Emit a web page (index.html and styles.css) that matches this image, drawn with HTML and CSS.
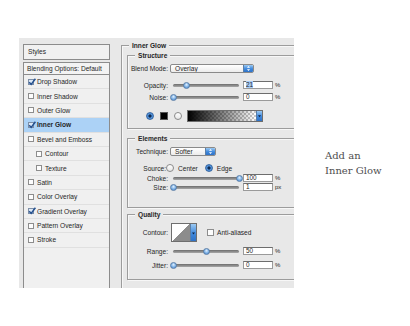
FILE: index.html
```html
<!DOCTYPE html>
<html>
<head>
<meta charset="utf-8">
<link rel="stylesheet" href="styles.css">
</head>
<body>
<div class="page">
  <div class="dialog">
    <div class="side">
      <div class="side-head">Styles</div>
      <div class="side-list">
        <div class="blend">Blending Options: Default</div>
        <div class="fx"><span class="cb on"><svg viewBox="0 0 8 8"><path d="M1.2 4.2 L3.2 6.4 L7.4 0.8"/></svg></span>Drop Shadow</div>
        <div class="fx"><span class="cb"></span>Inner Shadow</div>
        <div class="fx"><span class="cb"></span>Outer Glow</div>
        <div class="fx active"><span class="cb on"><svg viewBox="0 0 8 8"><path d="M1.2 4.2 L3.2 6.4 L7.4 0.8"/></svg></span>Inner Glow</div>
        <div class="fx"><span class="cb"></span>Bevel and Emboss</div>
        <div class="fx sub-fx"><span class="cb"></span>Contour</div>
        <div class="fx sub-fx"><span class="cb"></span>Texture</div>
        <div class="fx"><span class="cb"></span>Satin</div>
        <div class="fx"><span class="cb"></span>Color Overlay</div>
        <div class="fx"><span class="cb on"><svg viewBox="0 0 8 8"><path d="M1.2 4.2 L3.2 6.4 L7.4 0.8"/></svg></span>Gradient Overlay</div>
        <div class="fx"><span class="cb"></span>Pattern Overlay</div>
        <div class="fx"><span class="cb"></span>Stroke</div>
      </div>
    </div>

    <div class="group main">
      <div class="legend">Inner Glow</div>

      <div class="group sub structure">
        <div class="legend">Structure</div>
        <div class="row r-blend">
          <span class="lbl">Blend Mode:</span>
          <div class="select w-blend"><span class="sel-text">Overlay</span><span class="stepper"><svg viewBox="0 0 9 9"><path d="M2.5 3.6 L4.5 1.4 L6.5 3.6Z M2.5 5.4 L4.5 7.6 L6.5 5.4Z"/></svg></span></div>
        </div>
        <div class="row r-opacity">
          <span class="lbl">Opacity:</span>
          <div class="slider"><span class="track"></span><span class="thumb" style="left:21%"></span></div>
          <div class="field"><span class="selected">21</span></div>
          <span class="unit">%</span>
        </div>
        <div class="row r-noise">
          <span class="lbl">Noise:</span>
          <div class="slider"><span class="track"></span><span class="thumb" style="left:0%"></span></div>
          <div class="field">0</div>
          <span class="unit">%</span>
        </div>
        <div class="row r-color">
          <span class="radio on"></span>
          <span class="swatch"></span>
          <span class="radio"></span>
          <div class="gradient"><span class="grad-fill"></span><span class="drop"><svg viewBox="0 0 6 10"><path d="M1.2 4 L4.8 4 L3 6.4Z"/></svg></span></div>
        </div>
      </div>

      <div class="group sub elements">
        <div class="legend">Elements</div>
        <div class="row r-tech">
          <span class="lbl">Technique:</span>
          <div class="select w-tech"><span class="sel-text">Softer</span><span class="stepper"><svg viewBox="0 0 9 9"><path d="M2.5 3.6 L4.5 1.4 L6.5 3.6Z M2.5 5.4 L4.5 7.6 L6.5 5.4Z"/></svg></span></div>
        </div>
        <div class="row r-source">
          <span class="lbl lbl-source">Source:</span>
          <span class="radio"></span>
          <span class="opt">Center</span>
          <span class="radio on gap-radio"></span>
          <span class="opt">Edge</span>
        </div>
        <div class="row r-choke">
          <span class="lbl">Choke:</span>
          <div class="slider"><span class="track"></span><span class="thumb" style="left:100%"></span></div>
          <div class="field">100</div>
          <span class="unit">%</span>
        </div>
        <div class="row r-size">
          <span class="lbl">Size:</span>
          <div class="slider"><span class="track"></span><span class="thumb" style="left:0%"></span></div>
          <div class="field">1</div>
          <span class="unit">px</span>
        </div>
      </div>

      <div class="group sub quality">
        <div class="legend">Quality</div>
        <div class="row r-contour">
          <span class="lbl">Contour:</span>
          <div class="contour"><span class="curve"></span><span class="drop"><svg viewBox="0 0 6 10"><path d="M1.2 5 L4.8 5 L3 7.4Z"/></svg></span></div>
          <span class="cb aa"></span>
          <span class="opt">Anti-aliased</span>
        </div>
        <div class="row r-range">
          <span class="lbl">Range:</span>
          <div class="slider"><span class="track"></span><span class="thumb" style="left:50%"></span></div>
          <div class="field">50</div>
          <span class="unit">%</span>
        </div>
        <div class="row r-jitter">
          <span class="lbl">Jitter:</span>
          <div class="slider"><span class="track"></span><span class="thumb" style="left:0%"></span></div>
          <div class="field">0</div>
          <span class="unit">%</span>
        </div>
      </div>
    </div>
  </div>

  <div class="caption">Add an<br>Inner Glow</div>
</div>
</body>
</html>
```

FILE: styles.css
```css
* { box-sizing: border-box; margin: 0; padding: 0; }

html, body {
  width: 410px;
  height: 326px;
  background: #ffffff;
  overflow: hidden;
}

body {
  font-family: "Liberation Sans", Arial, sans-serif;
  font-size: 6.6px;
  color: #262626;
}

.page {
  display: flex;
  align-items: stretch;
  padding: 38px 0 0 19px;
}

.dialog {
  width: 275px;
  height: 250px;
  flex: none;
  background: #e8e8e8;
  display: flex;
  align-items: flex-start;
  padding: 6px 0 0 4px;
  overflow: hidden;
}

/* ---------- left style list ---------- */
.side {
  width: 87px;
  height: 260px;
  flex: none;
  display: flex;
  flex-direction: column;
}

.side-head {
  height: 16px;
  border: 1px solid #8c8c8c;
  background: #f1f1f1;
  padding-left: 4px;
  line-height: 14px;
}

.side-list {
  margin-top: 2px;
  flex: 1;
  border: 1px solid #8c8c8c;
  border-bottom: none;
  background: #f0f0f0;
}

.blend {
  height: 12px;
  line-height: 11px;
  padding-left: 3px;
  border-bottom: 1px solid #8c8c8c;
  background: #f3f3f3;
}

.fx {
  height: 14.4px;
  display: flex;
  align-items: center;
  padding-left: 4px;
  border-bottom: 1px solid #e0e0e0;
}

.fx.sub-fx { padding-left: 12px; }

.fx.active {
  background: #acd2f6;
  font-weight: bold;
}

.cb {
  width: 6px;
  height: 6px;
  flex: none;
  border: 1px solid #8d8d8d;
  background: #fdfdfd;
  margin-right: 3px;
  position: relative;
}

.cb.on { background: #dce8f6; border-color: #7d8fa8; }

.cb svg {
  position: absolute;
  left: -1px;
  top: -2px;
  width: 8px;
  height: 8px;
  fill: none;
  stroke: #24508f;
  stroke-width: 1.5;
}

/* ---------- group boxes ---------- */
.group {
  border: 1px solid #9c9c9c;
  box-shadow: inset 1px 1px 0 #f7f7f7, 1px 1px 0 #f7f7f7;
}

.legend {
  display: block;
  width: max-content;
  height: 9px;
  line-height: 9px;
  margin: -5px 0 0 7px;
  padding: 0 3px;
  background: #e8e8e8;
  font-weight: bold;
}

.main {
  width: 190px;
  height: 260px;
  flex: none;
  margin: 1px 0 0 11px;
}

.sub { margin: 0 5px 0 5px; }
.structure { margin-top: 5px; padding-bottom: 6px; }
.elements { margin-top: 9px; padding-bottom: 16px; }
.quality { margin-top: 6px; padding-bottom: 10px; }

.row {
  display: flex;
  align-items: center;
  white-space: nowrap;
}

.lbl {
  width: 40px;
  flex: none;
  text-align: right;
}

.lbl-source { width: 38px; }

.r-blend { height: 9px; margin-top: 4px; }
.r-opacity { height: 8px; margin-top: 8px; }
.r-noise { height: 8px; margin-top: 4px; }
.r-color { height: 12px; margin-top: 9px; padding-left: 18px; }

.r-tech { height: 9px; margin-top: 4px; }
.r-source { height: 10px; margin-top: 7px; }
.r-choke { height: 8px; margin-top: 1px; }
.r-size { height: 8px; margin-top: 1px; }

.r-contour { height: 19px; margin-top: 4px; }
.r-range { height: 8px; margin-top: 5px; }
.r-jitter { height: 8px; margin-top: 6px; }

/* select */
.select {
  margin-left: 2px;
  height: 9px;
  display: flex;
  border: 1px solid #8a8a8a;
  border-radius: 2px;
  background: linear-gradient(#ffffff, #ececec);
  overflow: hidden;
}
.w-blend { width: 84px; }
.w-tech { width: 46px; }

.sel-text {
  flex: 1;
  padding-left: 4px;
  line-height: 7px;
}

.stepper {
  width: 10px;
  flex: none;
  background: linear-gradient(#9ccaf3, #3f88dc 55%, #2f72c6);
  border-left: 1px solid #5a7fa8;
  display: flex;
  align-items: center;
  justify-content: center;
}
.stepper svg { width: 7px; height: 7px; fill: #ffffff; }

/* slider */
.slider {
  position: relative;
  width: 66px;
  height: 8px;
  margin-left: 5px;
  flex: none;
  display: flex;
  align-items: center;
}
.track {
  display: block;
  width: 100%;
  height: 3px;
  border-radius: 2px;
  background: linear-gradient(#6c6c6c, #a8a8a8);
}
.thumb {
  position: absolute;
  top: 0.5px;
  width: 7px;
  height: 7px;
  margin-left: -3.5px;
  border-radius: 50%;
  border: 1px solid #5b7fa8;
  background: radial-gradient(circle at 50% 35%, #e4f1ff 0, #8dbcea 45%, #3d7fce 100%);
}

/* numeric input */
.field {
  width: 30px;
  height: 8px;
  flex: none;
  margin-left: 4px;
  background: #ffffff;
  border: 1px solid #9a9a9a;
  border-top-color: #6d6d6d;
  padding-left: 2px;
  line-height: 6px;
  font-size: 6.4px;
}
.selected { background: #a9cdf7; }

.unit { margin-left: 2px; font-size: 6px; }

/* radios */
.radio {
  width: 8px;
  height: 8px;
  flex: none;
  border-radius: 50%;
  border: 1px solid #8a8a8a;
  background: linear-gradient(#ffffff, #e6e6e6);
}
.radio.on {
  border-color: #3b6aa3;
  background: radial-gradient(circle, #0d2a52 0 1.4px, #5d9de3 1.8px, #2e6fc2 100%);
}

.swatch {
  width: 8px;
  height: 8px;
  flex: none;
  margin: 0 6px;
  background: #000000;
  border: 1px solid #555555;
}

.gradient {
  width: 76px;
  height: 12px;
  flex: none;
  margin-left: 5px;
  display: flex;
  border: 1px solid #6e6e6e;
  background: conic-gradient(#c8c8c8 25%, #ffffff 0 50%, #c8c8c8 0 75%, #ffffff 0) 0 0 / 4px 4px;
}
.grad-fill {
  flex: 1;
  background: linear-gradient(90deg, #000000, rgba(0, 0, 0, 0));
}
.drop {
  width: 6px;
  flex: none;
  background: linear-gradient(#9ccaf3, #3f88dc 55%, #2f72c6);
  border-left: 1px solid #5a7fa8;
  display: flex;
}
.drop svg { width: 6px; height: 100%; fill: #0f2545; }

/* source row */
.opt { margin-left: 4px; }
.gap-radio { margin-left: 7px; }

/* contour */
.contour {
  width: 26px;
  height: 19px;
  margin-left: 3px;
  flex: none;
  display: flex;
  border: 1px solid #6e6e6e;
}
.curve {
  flex: 1;
  background: linear-gradient(to top left, #8c8c8c 50%, #ffffff 50%);
}

.cb.aa {
  width: 7px;
  height: 7px;
  margin: 0 0 0 10px;
}
.r-contour .opt { margin-left: 3px; }

/* caption */
.caption {
  align-self: center;
  margin-left: 31px;
  font-family: "DejaVu Serif", serif;
  font-size: 10px;
  line-height: 15px;
  color: #4e4e4e;
}
```
